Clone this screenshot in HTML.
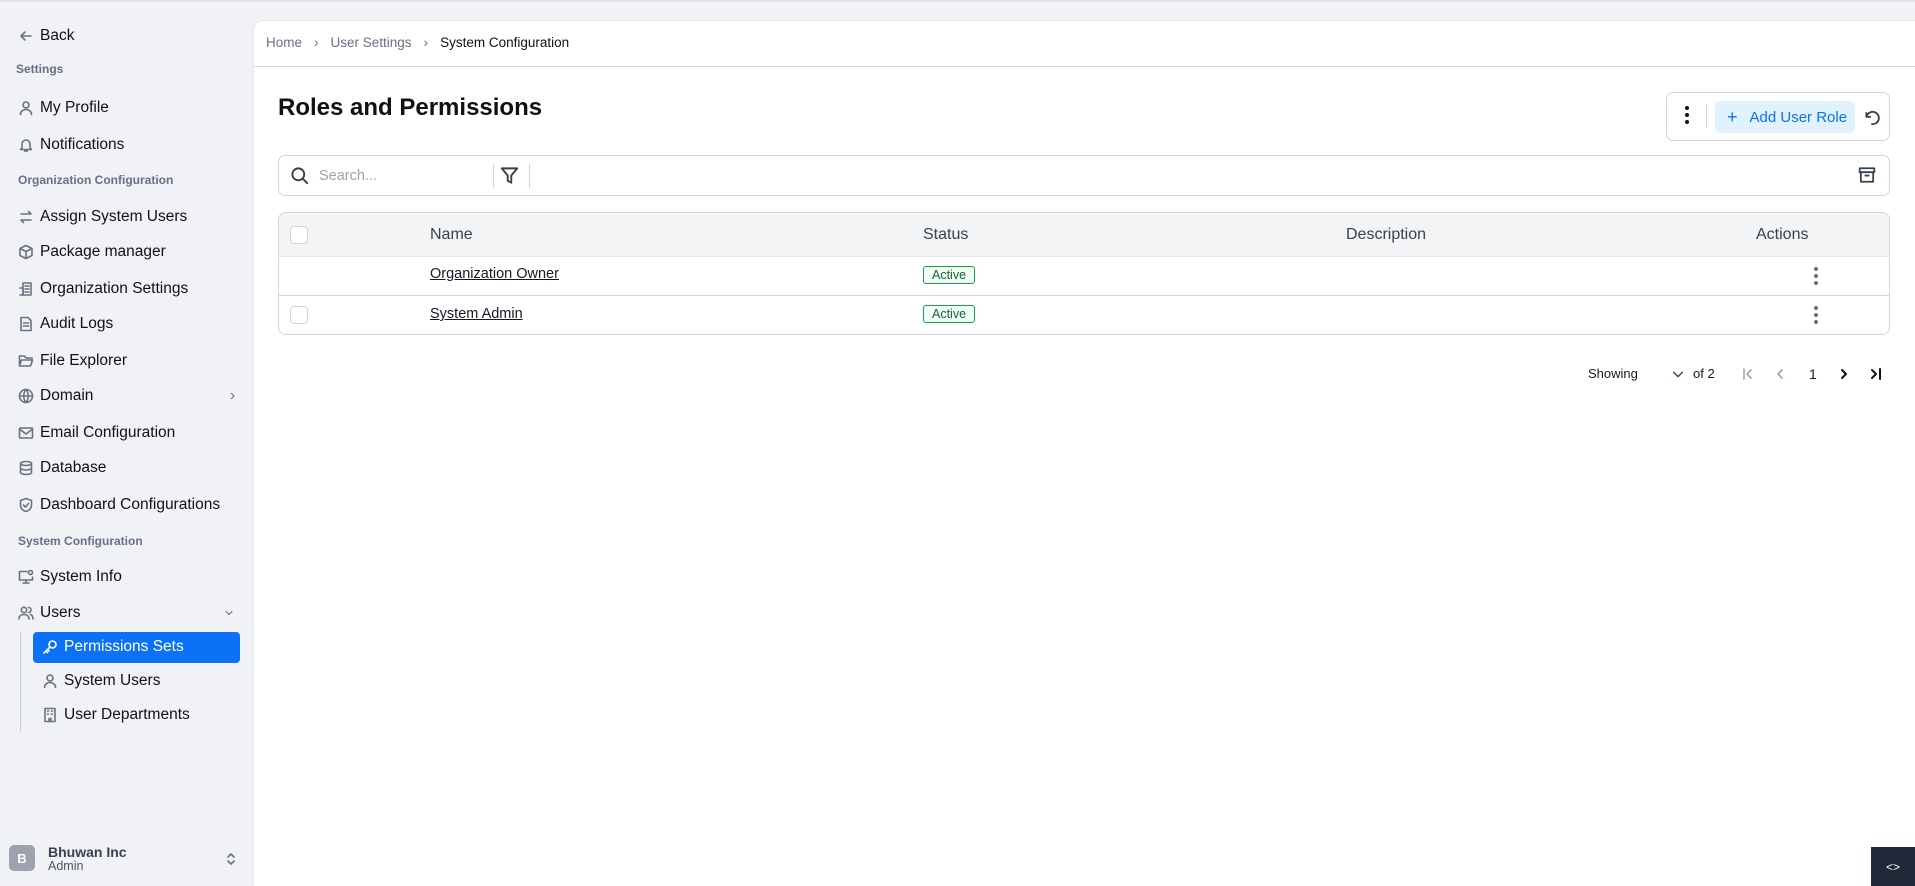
<!DOCTYPE html>
<html><head><meta charset="utf-8"><style>
*{box-sizing:border-box;margin:0;padding:0}
body{width:1915px;height:884px;overflow:hidden;background:#f0f2f5;font-family:"Liberation Sans",sans-serif;color:#111827;position:relative;border-top:2px solid #e2e4e8}
.sb{position:absolute;left:0;top:0;width:253px;height:884px}
.it{position:absolute;left:18px;display:flex;align-items:center;font-size:15.5px;color:#111;height:24px;transform:translateY(-50%)}
.it svg{width:16px;height:16px;margin-right:6px;stroke:#6b7280;fill:none;stroke-width:1.6;stroke-linecap:round;stroke-linejoin:round}
.sec{position:absolute;left:18px;font-size:12px;font-weight:bold;color:#667085;transform:translateY(-50%)}
.main{position:absolute;left:253px;top:18px;width:1662px;height:866px;background:#fff;border-top-left-radius:10px;border-left:1px solid #e5e7eb;border-top:1px solid #e5e7eb}
.abs{position:absolute}
.bc{top:14px;left:12px;font-size:13.5px;color:#667085;display:flex;align-items:center;gap:12px}
.hl{top:45px;left:0;right:0;height:1px;background:#d8dce2}
svg.ic{fill:none;stroke:#374151;stroke-width:1.6;stroke-linecap:round;stroke-linejoin:round}
</style></head><body>
<div class="sb">
<div class="it" style="top:34px;left:18px"><svg viewBox="0 0 16 16"><path d="M13 8H3M7 4L3 8l4 4"/></svg>Back</div>
<div class="sec" style="top:67px;left:16px">Settings</div>
<div class="it" style="top:106px"><svg viewBox="0 0 16 16"><circle cx="8" cy="5" r="3"/><path d="M2.5 14.5c0-3 2.5-5 5.5-5s5.5 2 5.5 5"/></svg>My Profile</div>
<div class="it" style="top:143px"><svg viewBox="0 0 16 16"><path d="M4 11V7a4 4 0 018 0v4l1.5 1.5h-11zM6.5 14h3"/></svg>Notifications</div>
<div class="sec" style="top:178px">Organization Configuration</div>
<div class="it" style="top:215px"><svg viewBox="0 0 16 16"><path d="M3 5h10l-2.5-2.5M13 11H3l2.5 2.5"/></svg>Assign System Users</div>
<div class="it" style="top:250px"><svg viewBox="0 0 16 16"><path d="M8 1.5l6 3v7l-6 3-6-3v-7zM2 4.5l6 3 6-3M8 7.5v7"/></svg>Package manager</div>
<div class="it" style="top:287px"><svg viewBox="0 0 16 16"><rect x="5" y="2" width="8" height="12"/><path d="M2 7h3v7H2M7 5h4M7 8h4M7 11h4"/></svg>Organization Settings</div>
<div class="it" style="top:322px"><svg viewBox="0 0 16 16"><path d="M3 1.5h7l3 3v10H3zM5.5 7h5M5.5 10h5"/></svg>Audit Logs</div>
<div class="it" style="top:359px"><svg viewBox="0 0 16 16"><path d="M1.5 13V3h5l1.5 2h6v2M1.5 13l2-6h11l-2 6z"/></svg>File Explorer</div>
<div class="it" style="top:394px;width:217px"><svg viewBox="0 0 16 16"><circle cx="8" cy="8" r="6.5"/><path d="M1.5 8h13M8 1.5c-3 3.5-3 9.5 0 13M8 1.5c3 3.5 3 9.5 0 13"/></svg>Domain<span style="margin-left:auto;color:#6b7280">›</span></div>
<div class="it" style="top:431px"><svg viewBox="0 0 16 16"><rect x="1.5" y="3" width="13" height="10" rx="1"/><path d="M1.5 4l6.5 5 6.5-5"/></svg>Email Configuration</div>
<div class="it" style="top:466px"><svg viewBox="0 0 16 16"><ellipse cx="8" cy="3.5" rx="5.5" ry="2"/><path d="M2.5 3.5v9c0 1.1 2.5 2 5.5 2s5.5-.9 5.5-2v-9M2.5 8c0 1.1 2.5 2 5.5 2s5.5-.9 5.5-2"/></svg>Database</div>
<div class="it" style="top:503px"><svg viewBox="0 0 16 16"><path d="M8 1.5l5.5 2v4.5c0 3.5-2.5 5.5-5.5 6.5-3-1-5.5-3-5.5-6.5V3.5zM5.5 8l2 2 3-3.5"/></svg>Dashboard Configurations</div>
<div class="sec" style="top:539px">System Configuration</div>
<div class="it" style="top:575px"><svg viewBox="0 0 16 16"><path d="M9 2.5H1.5v8.5h13V8M8 11v3M5 14h6"/><circle cx="12.5" cy="3.5" r="2"/></svg>System Info</div>
<div class="it" style="top:611px;width:217px"><svg viewBox="0 0 16 16"><circle cx="6" cy="5" r="2.7"/><path d="M1 14c0-3 2.2-4.5 5-4.5s5 1.5 5 4.5M10.5 2.5a2.5 2.5 0 010 5M12.5 9.5c1.5.6 2.5 2 2.5 4.5"/></svg>Users<svg viewBox="0 0 16 16" style="margin-left:auto;margin-right:0;width:12px;height:12px"><path d="M4 6l4 4 4-4"/></svg></div>
<div class="abs" style="left:20px;top:630px;width:1px;height:100px;background:#c9cdd3"></div>
<div class="abs" style="left:33px;top:630px;width:207px;height:31px;background:#0b72f5;border-radius:4px"></div>
<div class="it" style="top:645px;left:42px;color:#fff"><svg viewBox="0 0 16 16" style="stroke:#fff"><circle cx="10.5" cy="5.5" r="3.5"/><path d="M8 8l-6 6M4 12l1.5 1.5M5.5 10.5l1.5 1.5"/></svg>Permissions Sets</div>
<div class="it" style="top:679px;left:42px"><svg viewBox="0 0 16 16"><circle cx="8" cy="5" r="3"/><path d="M2.5 14.5c0-3 2.5-5 5.5-5s5.5 2 5.5 5"/></svg>System Users</div>
<div class="it" style="top:713px;left:42px"><svg viewBox="0 0 16 16"><rect x="3" y="1.5" width="10" height="13"/><path d="M5.5 4h1M9.5 4h1M5.5 7h1M9.5 7h1M7 14.5v-3h2v3"/></svg>User Departments</div>
<div class="abs" style="left:9px;top:843px;width:26px;height:26px;background:#9ca3af;border-radius:5px;color:#fff;font-weight:bold;font-size:13px;display:flex;align-items:center;justify-content:center">B</div>
<div class="abs" style="left:48px;top:842px;font-size:14px;font-weight:bold;color:#374151">Bhuwan Inc</div>
<div class="abs" style="left:48px;top:857px;font-size:12.5px;color:#4b5563">Admin</div>
<svg class="abs ic" style="left:225px;top:849px;stroke:#6b7280" width="12" height="16" viewBox="0 0 12 16"><path d="M3 6l3-3 3 3M3 10l3 3 3-3"/></svg>
</div>
<div class="main">
<div class="abs bc"><span>Home</span><span>›</span><span>User Settings</span><span>›</span><span style="color:#111">System Configuration</span></div>
<div class="abs hl"></div>
<div class="abs" style="left:24px;top:73px;font-size:24px;font-weight:bold;color:#111">Roles and Permissions</div>
<div class="abs" style="left:1412px;top:71px;width:224px;height:49px;border:1px solid #d1d5db;border-radius:7px"></div>
<div class="abs" style="left:1431px;top:85px;width:4px"><div style="width:4px;height:4px;background:#111;border-radius:50%;margin-bottom:3px"></div><div style="width:4px;height:4px;background:#111;border-radius:50%;margin-bottom:3px"></div><div style="width:4px;height:4px;background:#111;border-radius:50%"></div></div>
<div class="abs" style="left:1452px;top:83px;width:1px;height:24px;background:#d1d5db"></div>
<div class="abs" style="left:1461px;top:80px;width:140px;height:32px;background:#e0f2fe;border-radius:6px;color:#0b72f5;font-size:15px;display:flex;align-items:center;padding-left:12px"><span style="font-size:18px;margin-right:12px">+</span>Add User Role</div>
<svg class="abs ic" style="left:1609px;top:88px" width="18" height="18" viewBox="0 0 16 16"><path d="M3 3.5v3.5h3.5"/><path d="M3.3 6.5A5.5 5.5 0 118 13.5"/></svg>
<div class="abs" style="left:24px;top:134px;width:1612px;height:41px;border:1px solid #d1d5db;border-radius:7px"></div>
<svg class="abs ic" style="left:36px;top:145px" width="19" height="19" viewBox="0 0 16 16"><circle cx="7" cy="7" r="5"/><path d="M11 11l3.5 3.5"/></svg>
<div class="abs" style="left:65px;top:147px;font-size:14.5px;color:#9ca3af">Search...</div>
<div class="abs" style="left:239px;top:143px;width:1px;height:24px;background:#d1d5db"></div>
<svg class="abs ic" style="left:246px;top:145px" width="19" height="19" viewBox="0 0 16 16"><path d="M1.5 2h13L9.5 8v6l-3-1.5V8z"/></svg>
<div class="abs" style="left:275px;top:143px;width:1px;height:24px;background:#d1d5db"></div>
<svg class="abs ic" style="left:1604px;top:145px" width="18" height="18" viewBox="0 0 16 16"><rect x="1.5" y="2" width="13" height="3.5"/><path d="M2.5 5.5v8.5h11V5.5M6.5 8.5h3"/></svg>
<div class="abs" style="left:24px;top:191px;width:1612px;height:123px;border:1px solid #d1d5db;border-radius:8px;overflow:hidden">
 <div style="height:44px;background:#f3f4f6;position:relative;border-bottom:1px solid #e5e7eb"></div>
 <div style="height:39px;border-bottom:1px solid #d1d5db"></div>
</div>
<div class="abs" style="left:36px;top:205px;width:18px;height:18px;border:1px solid #d1d5db;border-radius:4px;background:#fff"></div>
<div class="abs" style="left:36px;top:285px;width:18px;height:18px;border:1px solid #d1d5db;border-radius:4px;background:#fff"></div>
<div class="abs" style="left:176px;top:205px;font-size:16px;color:#374151">Name</div>
<div class="abs" style="left:669px;top:205px;font-size:16px;color:#374151">Status</div>
<div class="abs" style="left:1092px;top:205px;font-size:16px;color:#374151">Description</div>
<div class="abs" style="left:1502px;top:205px;font-size:16px;color:#374151">Actions</div>
<div class="abs" style="left:176px;top:245px;font-size:14.5px;text-decoration:underline">Organization Owner</div>
<div class="abs" style="left:176px;top:285px;font-size:14.5px;text-decoration:underline">System Admin</div>
<div class="abs" style="left:669px;top:245px;font-size:12.5px;color:#166534;background:#f0fdf4;border:1px solid #16a34a;border-radius:3px;padding:1px 8px">Active</div>
<div class="abs" style="left:669px;top:284px;font-size:12.5px;color:#166534;background:#f0fdf4;border:1px solid #16a34a;border-radius:3px;padding:1px 8px">Active</div>
<div class="abs" style="left:1560px;top:246px"><div style="width:4px;height:4px;background:#6b7280;border-radius:50%;margin-bottom:3px"></div><div style="width:4px;height:4px;background:#6b7280;border-radius:50%;margin-bottom:3px"></div><div style="width:4px;height:4px;background:#6b7280;border-radius:50%"></div></div>
<div class="abs" style="left:1560px;top:285px"><div style="width:4px;height:4px;background:#6b7280;border-radius:50%;margin-bottom:3px"></div><div style="width:4px;height:4px;background:#6b7280;border-radius:50%;margin-bottom:3px"></div><div style="width:4px;height:4px;background:#6b7280;border-radius:50%"></div></div>
<div class="abs" style="left:1334px;top:345px;font-size:13px">Showing</div>
<svg class="abs ic" style="left:1417px;top:346px" width="14" height="14" viewBox="0 0 16 16"><path d="M3 6l5 5 5-5"/></svg>
<div class="abs" style="left:1439px;top:345px;font-size:13px">of 2</div>
<svg class="abs ic" style="left:1486px;top:345px;stroke:#9ca3af" width="16" height="16" viewBox="0 0 16 16"><path d="M4 3v10M11 4L7 8l4 4"/></svg>
<svg class="abs ic" style="left:1518px;top:345px;stroke:#9ca3af" width="16" height="16" viewBox="0 0 16 16"><path d="M10 4L6 8l4 4"/></svg>
<div class="abs" style="left:1555px;top:345px;font-size:14px">1</div>
<svg class="abs ic" style="left:1582px;top:345px;stroke:#111;stroke-width:2" width="16" height="16" viewBox="0 0 16 16"><path d="M6 4l4 4-4 4"/></svg>
<svg class="abs ic" style="left:1614px;top:345px;stroke:#111;stroke-width:2" width="16" height="16" viewBox="0 0 16 16"><path d="M4 4l4 4-4 4M12 3v10"/></svg>
</div>
<div class="abs" style="left:1871px;top:845px;width:44px;height:39px;background:#1f2937;color:#fff;font-size:12px;display:flex;align-items:center;justify-content:center">&lt;&gt;</div>
</body></html>
